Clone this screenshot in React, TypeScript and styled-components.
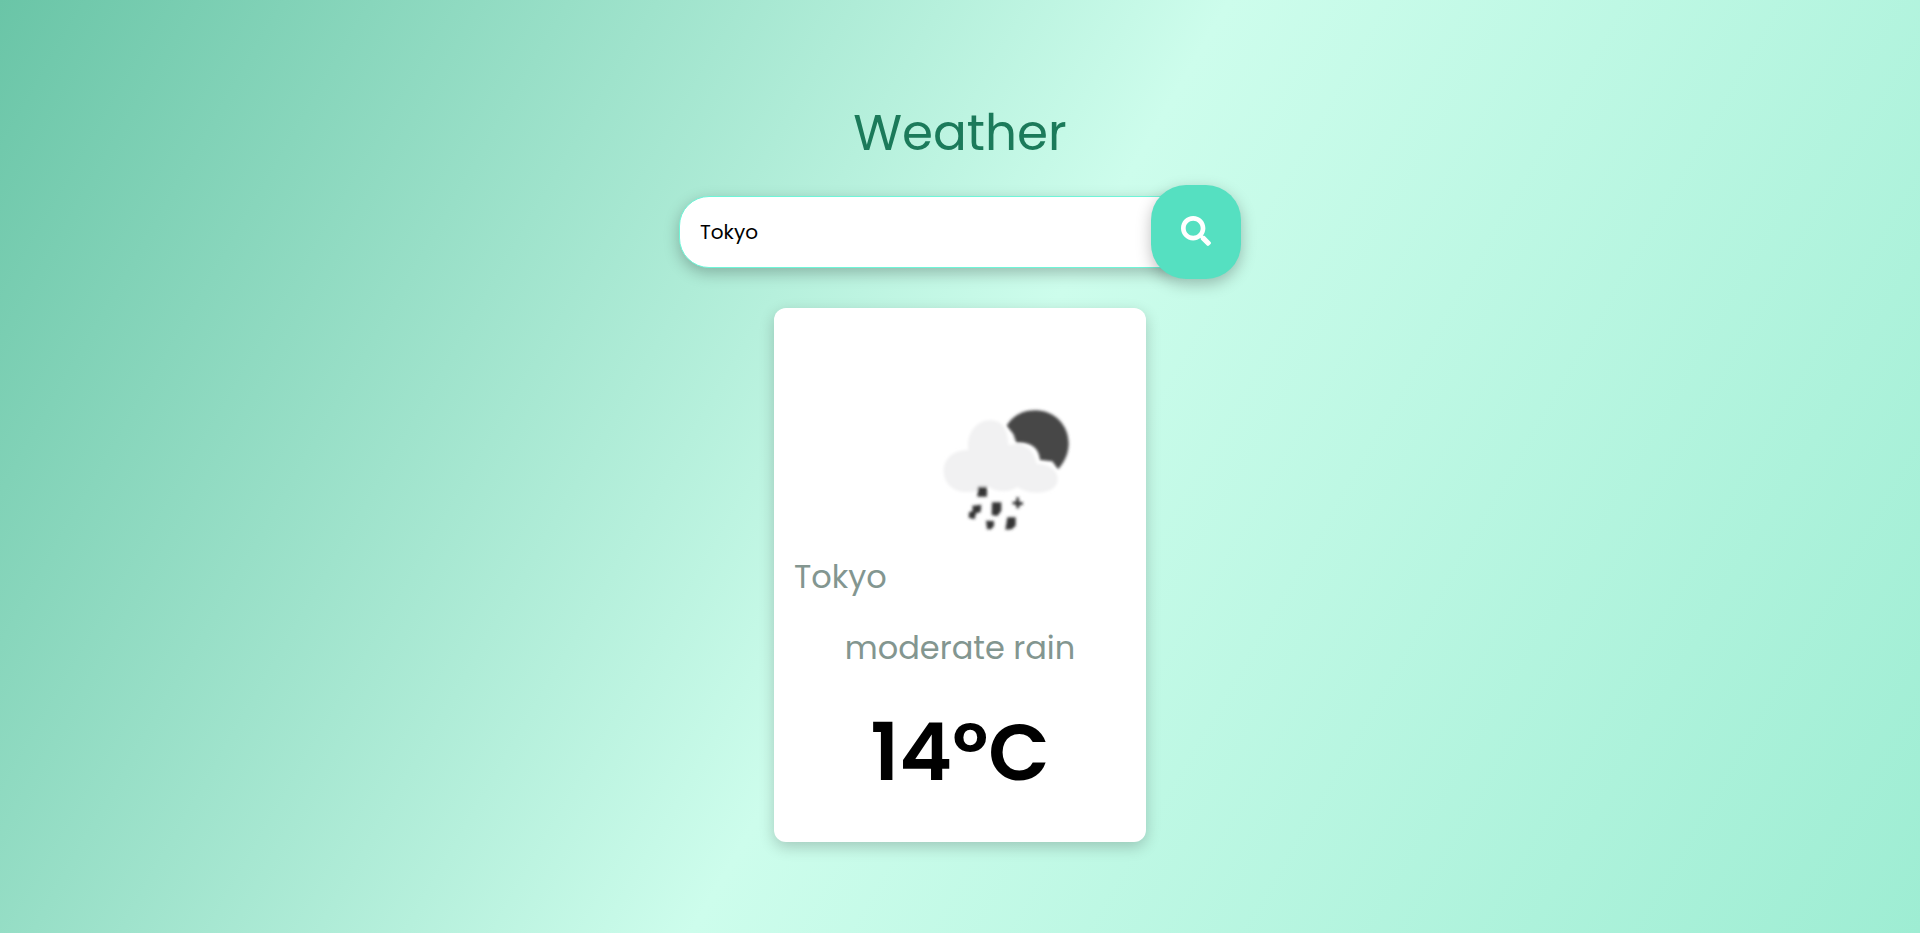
import React, { useState } from "react";
import styled, { createGlobalStyle } from "styled-components";
import { FaSearch } from "react-icons/fa";

const GlobalStyle = createGlobalStyle`
  * {
    box-sizing: border-box;
    margin: 0;
    padding: 0;
  }
  body {
    font-family: Poppins, Inter, "Open Sans", sans-serif;
  }
`;

const Page = styled.main`
  min-height: 100vh;
  display: flex;
  flex-direction: column;
  align-items: center;
  padding: 96px 24px 48px;
  background: linear-gradient(120deg, #6ac5a7 0%, #cdfdec 50%, #9eedd3 100%);
`;

const Title = styled.h1`
  font-size: 50px;
  font-weight: 400;
  line-height: 74px;
  color: #1b7a5a;
`;

const SearchForm = styled.form`
  display: flex;
  align-items: center;
  width: 100%;
  max-width: 562px;
  margin-top: 15px;
`;

const SearchInput = styled.input`
  flex: 1;
  min-width: 0;
  height: 72px;
  margin-right: -40px;
  padding: 0 60px 0 20px;
  border: 1px solid #6ff5d8;
  border-radius: 30px;
  background: #fff;
  box-shadow: 0 5px 15px rgba(0, 0, 0, 0.25);
  color: #000;
  font: inherit;
  font-size: 20px;
  outline: none;
`;

const SearchButton = styled.button`
  position: relative;
  display: flex;
  align-items: center;
  justify-content: center;
  width: 90px;
  height: 94px;
  padding-bottom: 2px;
  border: 0;
  border-radius: 35px;
  background: #55e0c1;
  box-shadow: 0 5px 15px rgba(0, 0, 0, 0.25);
  color: #fff;
  font-size: 30px;
  cursor: pointer;
`;

const Card = styled.section`
  display: flex;
  flex-direction: column;
  align-items: center;
  width: 100%;
  max-width: 372px;
  margin-top: 29px;
  padding: 20px 20px 33px;
  border-radius: 12px;
  background: #fff;
  box-shadow: 0 5px 15px rgba(0, 0, 0, 0.2);
`;

const WeatherIcon = styled.svg`
  align-self: flex-end;
  width: 240px;
  height: 225px;
`;

const Label = styled.p<{ $start?: boolean }>`
  align-self: ${(p) => (p.$start ? "flex-start" : "center")};
  margin-bottom: 23px;
  font-size: 32px;
  line-height: 48px;
  color: #839690;
`;

const Temperature = styled.p`
  font-size: 80px;
  font-weight: 600;
  line-height: 114px;
  color: #000;
`;

function RainNight() {
  return (
    <WeatherIcon viewBox="0 0 240 225" role="img" aria-label="Rain at night">
      <defs>
        <filter id="soften" x="-10%" y="-10%" width="120%" height="120%">
          <feGaussianBlur stdDeviation="5" />
        </filter>
      </defs>
      <g transform="translate(34 62) scale(0.33333)" filter="url(#soften)">
        <path
          fill="#464647"
          d="M260 107C280 75 310 61 347 61C403 61 446 106 446 160C446 190 434 216 414 238L397 214L360 210C357 177 336 155 289 158L280 132Z"
        />
        <path
          fill="#f1f1f2"
          d="M137 306C99 306 71 279 71 243C71 205 103 178 145 181C138 132 168 91 211 91C248 91 262 118 266 166C311 153 344 180 350 222C390 221 415 244 413 270C411 295 385 308 350 308C325 308 305 300 292 291C267 309 229 308 207 290C187 300 163 306 137 306Z"
        />
        <g fill="#343436">
          <path d="M174 290H201V320H172Z" />
          <path d="M157 347L184 344L182 366L168 370L164 388L146 383L147 367L158 363Z" />
          <path d="M216 337H244V362L232 378L215 375Z" />
          <path d="M289 322H297V335L309 337V344L298 346V355H289V345L277 342V336L289 334Z" />
          <path d="M198 392L222 393V408L213 418H201Z" />
          <path d="M262 382H287V407L275 418L256 419Z" />
        </g>
      </g>
    </WeatherIcon>
  );
}

export default function App() {
  const [city, setCity] = useState("Tokyo");

  return (
    <>
      <GlobalStyle />
      <Page>
        <Title>Weather</Title>
        <SearchForm onSubmit={(e) => e.preventDefault()}>
          <SearchInput
            type="text"
            aria-label="City"
            value={city}
            onChange={(e) => setCity(e.target.value)}
          />
          <SearchButton type="submit" aria-label="Search">
            <FaSearch />
          </SearchButton>
        </SearchForm>
        <Card>
          <RainNight />
          <Label $start>Tokyo</Label>
          <Label>moderate rain</Label>
          <Temperature>14ºC</Temperature>
        </Card>
      </Page>
    </>
  );
}
